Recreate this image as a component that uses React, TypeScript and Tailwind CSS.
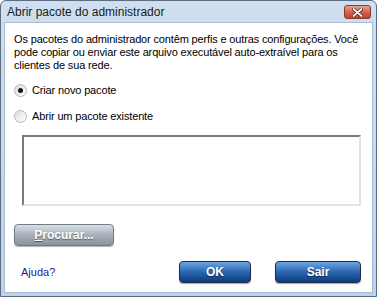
import React from "react";

const font = { fontFamily: '"Liberation Sans", Arial, sans-serif' };

const Radio: React.FC<{ checked?: boolean; label: string }> = ({ checked, label }) => (
  <label className="flex h-[13px] items-center gap-[5px] text-[11px] leading-[13px] tracking-[-0.15px] text-black">
    <span className="flex h-[13px] w-[13px] items-center justify-center rounded-full border border-[#b6b6b6] bg-gradient-to-br from-[#dcdcdc] to-white">
      {checked && <span className="h-[5px] w-[5px] rounded-full bg-[#1a1a1a]" />}
    </span>
    {label}
  </label>
);

const BlueButton: React.FC<{ label: string; className?: string }> = ({ label, className }) => (
  <button
    className={`h-[22px] rounded-[4px] border border-[#1b2f4f] bg-gradient-to-b from-[#6fa6e0] via-[#2a66b2] to-[#0d3b7a] text-[12px] font-bold text-white shadow-[0_1px_1px_rgba(0,0,0,0.35)] [text-shadow:0_1px_1px_rgba(0,0,0,0.5)] ${className ?? ""}`}
  >
    {label}
  </button>
);

export default function App() {
  return (
    <div
      className="flex h-[297px] w-[377px] flex-col overflow-hidden rounded-t-[6px] border border-[#5e6d80] bg-gradient-to-b from-[#cfdff0] to-[#bdd3ea]"
      style={font}
    >
      {/* title bar */}
      <div className="flex h-[21px] shrink-0 items-center justify-between pl-[6px] pr-[5px]">
        <span className="text-[12px] text-[#1b1b1b]">Abrir pacote do administrador</span>
        <span className="mt-[1px] flex h-[14px] w-[27px] items-center justify-center rounded-[3px] border border-[#8a3a2e] bg-gradient-to-b from-[#e8a394] via-[#d4614a] to-[#c0452f]">
          <svg width="11" height="9" viewBox="0 0 11 9">
            <path d="M1.5 1 L9.5 8 M9.5 1 L1.5 8" stroke="#4a1e16" strokeWidth="3.2" strokeLinecap="round" />
            <path d="M1.5 1 L9.5 8 M9.5 1 L1.5 8" stroke="#fff" strokeWidth="1.8" strokeLinecap="round" />
          </svg>
        </span>
      </div>

      {/* client area */}
      <div className="mx-[3px] mb-[3px] flex flex-1 flex-col border border-[#a9bdd6] bg-white px-[9px] pt-[10px]">
        <p className="whitespace-nowrap text-[11px] leading-[13px] tracking-[-0.15px] text-black">
          Os pacotes do administrador contêm perfis e outras configurações. Você
          <br />
          pode copiar ou enviar este arquivo executável auto-extraível para os
          <br />
          clientes de sua rede.
        </p>

        <div className="mt-[12px] flex flex-col gap-[13px]">
          <Radio checked label="Criar novo pacote" />
          <Radio label="Abrir um pacote existente" />
        </div>

        <div className="ml-[8px] mr-[2px] mt-[12px] h-[71px] shrink-0 border-2 border-b-[#e3e3e3] border-l-[#7a7a7a] border-r-[#e3e3e3] border-t-[#7a7a7a] bg-white" />

        <button className="mt-[18px] h-[22px] w-[100px] shrink-0 rounded-[4px] border border-[#6f7b87] bg-gradient-to-b from-[#d9dfe5] via-[#a7b1bb] to-[#8893a0] text-[12px] font-bold text-white shadow-[0_1px_1px_rgba(0,0,0,0.3)] [text-shadow:0_1px_1px_rgba(0,0,0,0.45)]">
          <span className="underline">P</span>rocurar...
        </button>

        <div className="mt-[15px] flex items-center">
          <a className="ml-[7px] text-[11px] text-[#1a1a99]">Ajuda?</a>
          <div className="ml-auto mr-[2px] flex gap-[24px]">
            <BlueButton label="OK" className="w-[72px]" />
            <BlueButton label="Sair" className="w-[86px]" />
          </div>
        </div>
      </div>
    </div>
  );
}
